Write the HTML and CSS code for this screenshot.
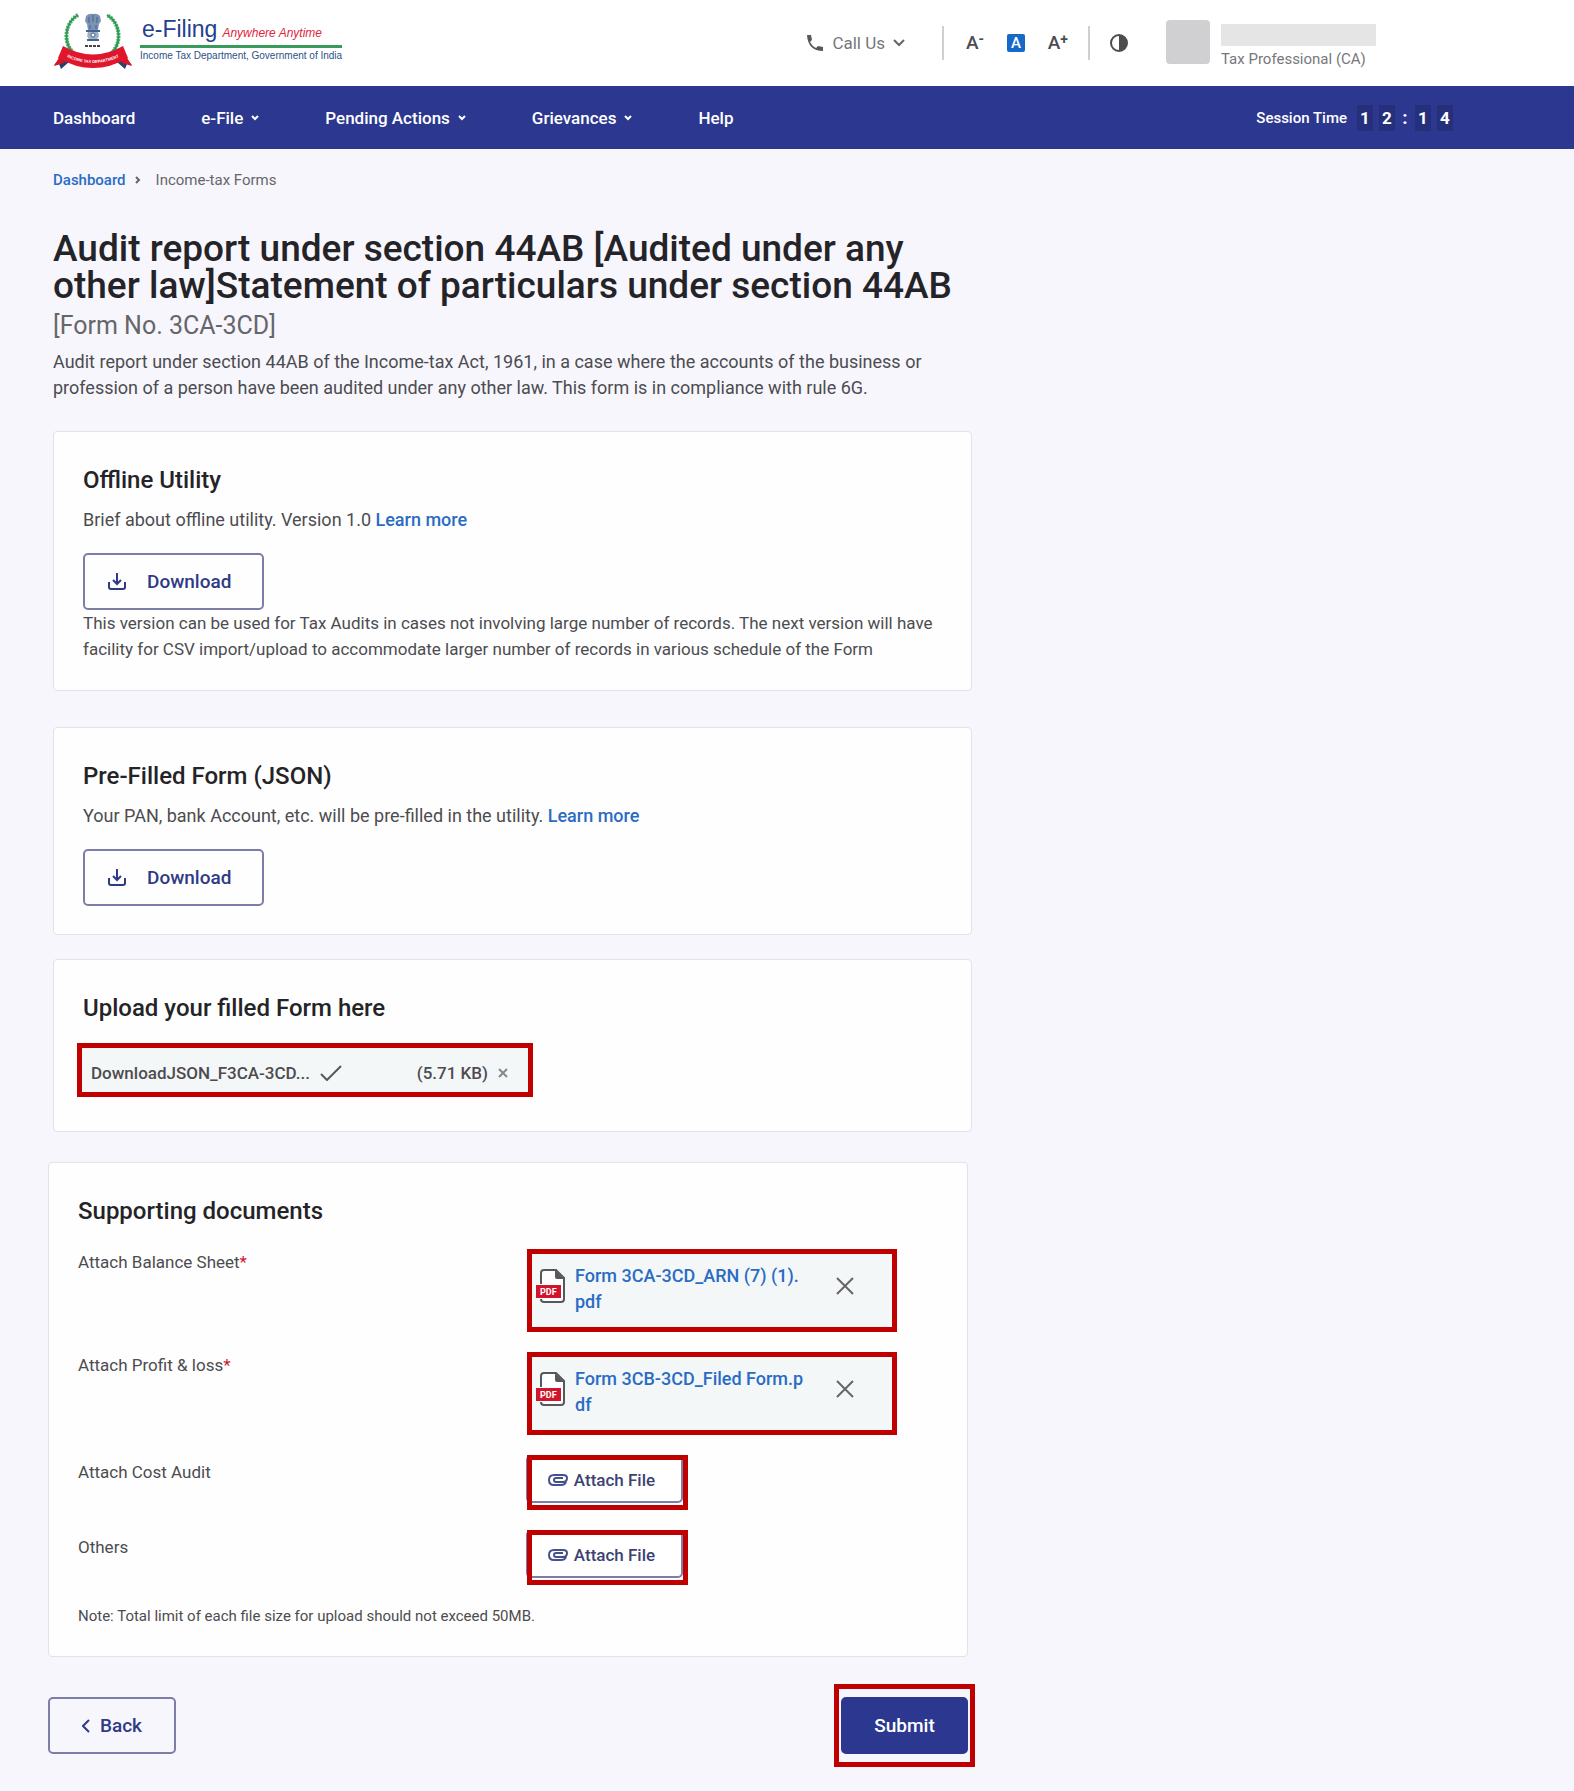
FILE: index.html
```html
<!DOCTYPE html>
<html lang="en">
<head>
<meta charset="UTF-8">
<meta name="viewport" content="width=device-width, initial-scale=1.0">
<title>e-Filing - Income-tax Forms</title>
<link rel="stylesheet" href="styles.css">
</head>
<body>

<header class="header">
  <a class="logo" href="#" aria-label="e-Filing home">
    <svg class="emblem" viewBox="0 0 80 58" width="80" height="58">
      <!-- laurel wreath -->
      <path d="M25 3 C11 11 9 33 23 43 Q30 48 39 48 Q49 48 56 43 C70 33 68 11 54 3" fill="none" stroke="#4fae70" stroke-width="4" stroke-dasharray="2 1"/>
      <path d="M25 3 C11 11 9 33 23 43 Q30 48 39 48 Q49 48 56 43 C70 33 68 11 54 3" fill="none" stroke="#2f9a55" stroke-width="2"/>
      <!-- lion capital -->
      <path d="M33 4 Q36 1 40 2 Q44 1 47 4 L48 9 L46 12 L45 18 L35 18 L34 12 L32 9 Z" fill="#7b93b3"/>
      <path d="M36 5 V11 M40 3 V10 M44 5 V11 M37 13 V17 M43 13 V17" stroke="#45618c" stroke-width="1"/>
      <rect x="33" y="18" width="14" height="2" fill="#45618c"/>
      <path d="M35 20 H45 Q47 25 44 27 H36 Q33 25 35 20 Z" fill="#9eb0c8"/>
      <circle cx="40" cy="23" r="2" fill="#fff" stroke="#45618c"/>
      <path d="M34 28 H46" stroke="#45618c" stroke-width="2"/>
      <path d="M32 34 H48" stroke="#444" stroke-width="2" stroke-dasharray="3 1"/>
      <!-- ribbon -->
      <path d="M8 45 L1 53 L6 52 L8 57 L16 50 Z M72 45 L79 53 L74 52 L72 57 L64 50 Z" fill="#27406f"/>
      <path d="M1 54 L7 44 L12 50 L8 52 Z M79 54 L73 44 L68 50 L72 52 Z" fill="#d9142b"/>
      <path d="M10 34 Q40 51 70 34 L75 46 Q40 66 5 46 Z" fill="#e0162d"/>
      <path id="ribbon-line" d="M8 42 Q40 60 72 42" fill="none"/>
      <text class="ribbon-text"><textPath href="#ribbon-line" startOffset="50%">INCOME TAX DEPARTMENT</textPath></text>
    </svg>
    <span class="logo-text">
      <span class="logo-top"><span class="logo-name">e-Filing</span><em>Anywhere Anytime</em></span>
      <span class="logo-dept">Income Tax Department, Government of India</span>
    </span>
  </a>

  <div class="tools">
    <button class="call-us" type="button">
      <svg viewBox="0 0 18 18" width="18" height="18"><path d="M1 1 H5 L6 6 L4 8 Q6 12 10 14 L12 12 L17 13 V17 Q2 17 1 1 Z" fill="#58585c"/></svg>
      <span>Call Us</span>
      <svg viewBox="0 0 12 8" width="12" height="8"><path d="M1 1 L6 6 L11 1" fill="none" stroke="#66666a" stroke-width="2"/></svg>
    </button>
    <div class="font-tools">
      <button class="font-button" type="button" aria-label="Decrease text size">A<sup>-</sup></button>
      <button class="font-button active" type="button" aria-label="Default text size">A</button>
      <button class="font-button" type="button" aria-label="Increase text size">A<sup>+</sup></button>
    </div>
    <button class="contrast" type="button" aria-label="Contrast">
      <svg viewBox="0 0 18 18" width="18" height="18"><circle cx="9" cy="9" r="8" fill="none" stroke="#4d4d50" stroke-width="2"/><path d="M9 1 A8 8 0 0 1 9 17 Z" fill="#4d4d50"/></svg>
    </button>
    <div class="profile">
      <div class="avatar"></div>
      <div class="profile-info">
        <div class="profile-name"></div>
        <div class="profile-role">Tax Professional (CA)</div>
      </div>
    </div>
  </div>
</header>

<nav class="navbar">
  <ul class="menu">
    <li><a href="#">Dashboard</a></li>
    <li><a href="#">e-File <svg viewBox="0 0 8 6" width="8" height="6"><path d="M1 1 L4 4 L7 1"/></svg></a></li>
    <li><a href="#">Pending Actions <svg viewBox="0 0 8 6" width="8" height="6"><path d="M1 1 L4 4 L7 1"/></svg></a></li>
    <li><a href="#">Grievances <svg viewBox="0 0 8 6" width="8" height="6"><path d="M1 1 L4 4 L7 1"/></svg></a></li>
    <li><a href="#">Help</a></li>
  </ul>
  <div class="session">
    <span class="session-label">Session Time</span>
    <span class="digit">1</span><span class="digit">2</span><span class="colon">:</span><span class="digit">1</span><span class="digit">4</span>
  </div>
</nav>

<main class="container">
  <div class="breadcrumb">
    <a href="#">Dashboard</a>
    <svg viewBox="0 0 6 8" width="6" height="8"><path d="M1 1 L4 4 L1 7" fill="none" stroke="#66666a" stroke-width="2"/></svg>
    <span>Income-tax Forms</span>
  </div>

  <h1>Audit report under section 44AB [Audited under any other law]Statement of particulars under section 44AB</h1>
  <div class="form-number">[Form No. 3CA-3CD]</div>
  <p class="intro">Audit report under section 44AB of the Income-tax Act, 1961, in a case where the accounts of the business or profession of a person have been audited under any other law. This form is in compliance with rule 6G.</p>

  <section class="card utility-card">
    <h2>Offline Utility</h2>
    <p class="brief">Brief about offline utility. Version 1.0 <a href="#">Learn more</a></p>
    <button class="button download" type="button">
      <svg viewBox="0 0 20 18" width="20" height="18"><path d="M2 9 V14 Q2 16 4 16 H16 Q18 16 18 14 V9 M10 0 V10 M6 7 L10 11 L14 7" fill="none" stroke="#2f3a85" stroke-width="2"/></svg>
      Download
    </button>
    <p>This version can be used for Tax Audits in cases not involving large number of records. The next version will have facility for CSV import/upload to accommodate larger number of records in various schedule of the Form</p>
  </section>

  <section class="card prefilled-card">
    <h2>Pre-Filled Form (JSON)</h2>
    <p class="brief">Your PAN, bank Account, etc. will be pre-filled in the utility. <a href="#">Learn more</a></p>
    <button class="button download" type="button">
      <svg viewBox="0 0 20 18" width="20" height="18"><path d="M2 9 V14 Q2 16 4 16 H16 Q18 16 18 14 V9 M10 0 V10 M6 7 L10 11 L14 7" fill="none" stroke="#2f3a85" stroke-width="2"/></svg>
      Download
    </button>
  </section>

  <section class="card upload-card">
    <h2>Upload your filled Form here</h2>
    <div class="file-box">
      <span>DownloadJSON_F3CA-3CD...</span>
      <svg viewBox="0 0 22 16" width="22" height="16"><path d="M1 9 L7 15 L21 1" fill="none" stroke="#58585c" stroke-width="2"/></svg>
      <span class="file-size">(5.71 KB)</span>
      <button class="remove" type="button" aria-label="Remove file">
        <svg viewBox="0 0 10 10" width="10" height="10"><path d="M1 1 L9 9 M9 1 L1 9" stroke="#88888c" stroke-width="2"/></svg>
      </button>
    </div>
  </section>
</main>

<form class="documents">
  <section class="card">
    <h2>Supporting documents</h2>
    <div class="rows">
      <div class="label">Attach Balance Sheet<span class="required">*</span></div>
      <div class="attachment">
        <svg class="pdf" viewBox="0 0 30 34" width="30" height="34">
          <path d="M5 15 V4 Q5 1 8 1 H20 L28 9 V30 Q28 33 25 33 H8 Q5 33 5 30" fill="#fff" stroke="#58585c" stroke-width="2"/>
          <path d="M19 1 L28 10 H21 Q19 10 19 8 Z" fill="#58585c"/>
          <rect x="0" y="16" width="25" height="13" fill="#d0162d"/>
          <text x="4" y="26">PDF</text>
        </svg>
        <a href="#">Form 3CA-3CD_ARN (7) (1).pdf</a>
        <button class="remove" type="button" aria-label="Remove balance sheet">
          <svg viewBox="0 0 18 18" width="18" height="18"><path d="M1 1 L17 17 M17 1 L1 17" stroke="#66666a" stroke-width="2"/></svg>
        </button>
      </div>

      <div class="label">Attach Profit &amp; loss<span class="required">*</span></div>
      <div class="attachment">
        <svg class="pdf" viewBox="0 0 30 34" width="30" height="34">
          <path d="M5 15 V4 Q5 1 8 1 H20 L28 9 V30 Q28 33 25 33 H8 Q5 33 5 30" fill="#fff" stroke="#58585c" stroke-width="2"/>
          <path d="M19 1 L28 10 H21 Q19 10 19 8 Z" fill="#58585c"/>
          <rect x="0" y="16" width="25" height="13" fill="#d0162d"/>
          <text x="4" y="26">PDF</text>
        </svg>
        <a href="#">Form 3CB-3CD_Filed Form.pdf</a>
        <button class="remove" type="button" aria-label="Remove profit and loss">
          <svg viewBox="0 0 18 18" width="18" height="18"><path d="M1 1 L17 17 M17 1 L1 17" stroke="#66666a" stroke-width="2"/></svg>
        </button>
      </div>

      <div class="label optional" id="cost-label">Attach Cost Audit</div>
      <div class="attach-cell">
        <button class="attach" type="button" aria-describedby="cost-label">
          <svg viewBox="0 0 20 12" width="20" height="12"><path d="M18 8 Q17 11 13 11 H6 Q1 11 1 6 Q1 1 6 1 H15 Q19 1 19 4 Q19 8 15 8 H8 Q6 8 6 6 Q6 4 8 4 H15" fill="none" stroke="#46508f" stroke-width="2"/></svg>
          Attach File
        </button>
      </div>

      <div class="label optional" id="others-label">Others</div>
      <div class="attach-cell">
        <button class="attach" type="button" aria-describedby="others-label">
          <svg viewBox="0 0 20 12" width="20" height="12"><path d="M18 8 Q17 11 13 11 H6 Q1 11 1 6 Q1 1 6 1 H15 Q19 1 19 4 Q19 8 15 8 H8 Q6 8 6 6 Q6 4 8 4 H15" fill="none" stroke="#46508f" stroke-width="2"/></svg>
          Attach File
        </button>
      </div>
    </div>
    <p class="note">Note: Total limit of each file size for upload should not exceed 50MB.</p>
  </section>

  <div class="actions">
    <button class="button back" type="button">
      <svg viewBox="0 0 8 14" width="8" height="14"><path d="M7 1 L1 7 L7 13" fill="none" stroke="#2f3a85" stroke-width="2"/></svg>
      Back
    </button>
    <button class="button submit" type="submit">Submit</button>
  </div>
</form>

</body>
</html>
```
FILE: styles.css
```css
* {
  box-sizing: border-box;
}

body {
  margin: 0;
  background-color: #f7f6fc;
  color: #4c4c50;
  font-family: Roboto, "Liberation Sans", sans-serif;
  font-size: 17px;
  line-height: 26px;
}

h1, h2, p, ul {
  margin: 0;
  padding: 0;
}

a {
  color: #2a6cc4;
  font-weight: 500;
  text-decoration: none;
}

button {
  font-family: inherit;
  cursor: pointer;
}

svg {
  flex-shrink: 0;
}

/* Header */
.header {
  display: flex;
  justify-content: space-between;
  height: 86px;
  padding: 0 198px 0 53px;
  background-color: #fff;
}

.logo {
  display: flex;
  gap: 7px;
  padding-top: 12px;
}

.ribbon-text {
  fill: #fff;
  font-family: "Liberation Sans", sans-serif;
  font-size: 4px;
  font-weight: bold;
  text-anchor: middle;
}

.logo-text {
  display: flex;
  flex-direction: column;
  padding-top: 4px;
  font-family: "Liberation Sans", sans-serif;
  font-weight: normal;
}

.logo-top {
  display: flex;
  align-items: baseline;
  gap: 5px;
  height: 32px;
  border-bottom: 3px solid #3a9a5c;
  padding-left: 2px;
}

.logo-name {
  color: #23408f;
  font-size: 23px;
}

.logo-top em {
  color: #e0263c;
  font-size: 12px;
}

.logo-dept {
  color: #2b5287;
  font-size: 10px;
  line-height: 16px;
}

.tools {
  display: flex;
  align-items: center;
}

.tools button {
  display: flex;
  align-items: center;
  border: none;
  background: none;
  padding: 0;
}

.tools .call-us {
  gap: 8px;
  padding-right: 37px;
  color: #77777b;
  font-size: 17px;
}

.font-tools {
  display: flex;
  align-items: center;
  justify-content: space-between;
  width: 148px;
  height: 34px;
  padding: 0 20px 0 22px;
  border-left: 2px solid #cfcfd2;
  border-right: 2px solid #cfcfd2;
}

.tools .font-button {
  color: #4d4d50;
  font-size: 19px;
  font-weight: 500;
  line-height: 18px;
}

.tools .font-button.active {
  justify-content: center;
  width: 18px;
  height: 18px;
  border-radius: 2px;
  background-color: #1769c9;
  color: #fff;
  font-size: 15px;
}

.font-button sup {
  align-self: flex-start;
  font-size: 14px;
  font-weight: 700;
  line-height: 10px;
}

.contrast {
  margin: 0 38px 0 20px;
}

.profile {
  display: flex;
  gap: 11px;
  padding-top: 5px;
}

.avatar {
  width: 44px;
  height: 44px;
  border-radius: 4px;
  background-color: #d0d0d2;
}

.profile-info {
  padding-top: 4px;
}

.profile-name {
  width: 155px;
  height: 22px;
  background-color: #e5e5e5;
}

.profile-role {
  color: #77777b;
  font-size: 15px;
}

/* Navigation */
.navbar {
  display: flex;
  align-items: center;
  justify-content: space-between;
  height: 63px;
  padding: 0 121px 0 53px;
  background-color: #2c388f;
  color: #fff;
}

.menu {
  display: flex;
  gap: 66px;
  list-style: none;
}

.menu a {
  display: flex;
  align-items: center;
  gap: 8px;
  color: #fff;
}

.menu path {
  fill: none;
  stroke: #fff;
  stroke-width: 2;
}

.session {
  display: flex;
  align-items: center;
  gap: 6px;
  font-weight: 700;
}

.session-label {
  margin-right: 4px;
  font-size: 15px;
  font-weight: 500;
}

.digit {
  width: 16px;
  background-color: #26307a;
  text-align: center;
}

.colon {
  width: 8px;
  font-size: 19px;
  text-align: center;
}

/* Page content */
.container {
  max-width: 972px;
  padding: 19px 0 0 53px;
}

.breadcrumb {
  display: flex;
  align-items: center;
  gap: 9px;
  font-size: 15px;
  line-height: 24px;
}

.breadcrumb span {
  margin-left: 6px;
  color: #66666a;
}

h1 {
  margin-top: 38px;
  color: #242428;
  font-size: 37px;
  font-weight: 500;
  line-height: 37px;
}

.form-number {
  margin-top: 8px;
  color: #66666a;
  font-size: 25px;
  line-height: 28px;
}

.intro {
  margin-top: 9px;
  max-width: 880px;
  font-size: 18px;
}

.card {
  padding: 32px 29px 28px;
  border: 1px solid #e3e2ea;
  border-radius: 4px;
  background-color: #fefefe;
}

.utility-card {
  margin-top: 30px;
}

.prefilled-card {
  margin-top: 36px;
}

.upload-card {
  margin-top: 24px;
  padding-bottom: 34px;
}

h2 {
  color: #242428;
  font-size: 24px;
  font-weight: 500;
  line-height: 32px;
}

.brief {
  margin: 11px 0 20px;
  font-size: 18px;
}

.button {
  display: flex;
  align-items: center;
  justify-content: center;
  height: 57px;
  border: 2px solid #7c7ea8;
  border-radius: 5px;
  background-color: transparent;
  color: #2f3a85;
  font-size: 19px;
  font-weight: 500;
}

.download {
  justify-content: flex-start;
  gap: 20px;
  width: 181px;
  padding: 0 22px;
}

.remove {
  display: flex;
  padding: 0;
  border: none;
  background: none;
}

.file-box {
  display: flex;
  align-items: center;
  gap: 10px;
  width: 456px;
  height: 54px;
  margin: 19px 0 0 -6px;
  padding: 6px 20px 0 9px;
  border: 5px solid #c00000;
  background-color: #f4f7f7;
  font-weight: 500;
}

.file-size {
  margin-left: auto;
}

/* Supporting documents */
.documents {
  max-width: 968px;
  margin-top: 30px;
  padding: 0 0 30px 48px;
}

.rows {
  display: grid;
  grid-template-columns: 449px 370px;
  gap: 20px 0;
  margin-top: 22px;
}

.label.optional {
  padding-top: 4px;
}

.required {
  color: #d0162d;
}

.attachment {
  display: flex;
  height: 83px;
  padding: 9px 38px 0 4px;
  border: 5px solid #c00000;
  background-color: #f4f7f7;
}

.attachment a {
  width: 230px;
  margin-left: 9px;
  font-size: 18px;
  word-break: break-all;
}

.attachment .remove {
  height: 18px;
  margin: 14px 0 0 auto;
}

.pdf {
  margin-top: 6px;
}

.pdf text {
  fill: #fff;
  font-family: Roboto, sans-serif;
  font-size: 9px;
  font-weight: 700;
}

.attach-cell {
  height: 55px;
}

.attach {
  position: relative;
  display: flex;
  align-items: center;
  justify-content: center;
  gap: 6px;
  width: 157px;
  height: 48px;
  margin-left: -1px;
  padding: 2px 10px 0 4px;
  border: 2px solid #7c7ea8;
  border-radius: 5px;
  background-color: #fff;
  color: #3c4273;
  font-size: 17px;
  font-weight: 500;
}

.attach::after,
.submit::after {
  content: "";
  position: absolute;
  inset: -2px -7px -9px -1px;
  border: 5px solid #c00000;
}

.note {
  margin-top: 19px;
  font-size: 15px;
  line-height: 24px;
}

.actions {
  display: flex;
  justify-content: space-between;
  margin-top: 40px;
}

.back {
  gap: 10px;
  width: 128px;
}

.submit {
  position: relative;
  width: 127px;
  border-color: #2c388f;
  background-color: #2c388f;
  color: #fff;
}

.submit::after {
  inset: -15px -9px;
}
```
